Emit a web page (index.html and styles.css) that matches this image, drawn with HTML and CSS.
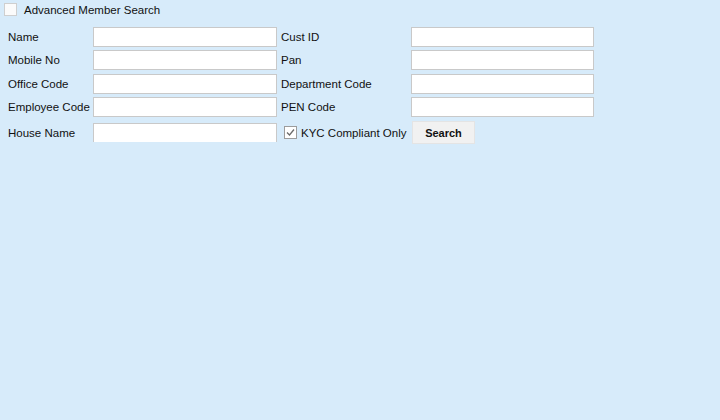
FILE: index.html
```html
<!DOCTYPE html>
<html>
<head>
<meta charset="utf-8">
<link rel="stylesheet" href="styles.css">
</head>
<body>
<div class="page">
  <label class="adv">
    <span class="box box-empty"></span>
    <span class="adv-text">Advanced Member Search</span>
  </label>
  <div class="form">
    <div class="lbl">Name</div>
    <div class="field"><span class="inp"></span></div>
    <div class="lbl lbl-r">Cust ID</div>
    <div class="field"><span class="inp"></span></div>

    <div class="lbl">Mobile No</div>
    <div class="field"><span class="inp"></span></div>
    <div class="lbl lbl-r">Pan</div>
    <div class="field"><span class="inp"></span></div>

    <div class="lbl">Office Code</div>
    <div class="field"><span class="inp"></span></div>
    <div class="lbl lbl-r">Department Code</div>
    <div class="field"><span class="inp"></span></div>

    <div class="lbl">Employee Code</div>
    <div class="field"><span class="inp"></span></div>
    <div class="lbl lbl-r">PEN Code</div>
    <div class="field"><span class="inp"></span></div>

    <div class="lbl last">House Name</div>
    <div class="field last"><span class="inp inp-open"></span></div>
    <div class="lbl last kyc">
      <span class="box box-checked">
        <svg width="11" height="11" viewBox="0 0 11 11"><path d="M2 5.5 L4.5 8 L9 2.5" fill="none" stroke="#6b6b6b" stroke-width="1.3"/></svg>
      </span>
      <span>KYC Compliant Only</span>
    </div>
    <div class="field last"><span class="btn">Search</span></div>
  </div>
</div>
</body>
</html>
```

FILE: styles.css
```css
html, body {
  margin: 0;
  padding: 0;
  background: #d7ebfa;
}
body {
  width: 720px;
  height: 420px;
  font-family: "Liberation Sans", Arial, sans-serif;
  font-size: 11.5px;
  color: #111;
}
.page {
  padding: 3px 0 0 4px;
}
.adv {
  display: flex;
  align-items: center;
  height: 13px;
}
.box {
  display: inline-flex;
  align-items: center;
  justify-content: center;
  box-sizing: border-box;
  width: 13px;
  height: 13px;
  background: #fff;
}
.box-empty {
  border: 1px solid #cfcfcf;
  background: #fbfbfb;
}
.box-checked {
  border: 1px solid #9c9c9c;
  margin-right: 4px;
}
.adv-text {
  margin-left: 7px;
}
.form {
  display: grid;
  grid-template-columns: 89px 184px 134px 183px;
  grid-auto-rows: 20px;
  row-gap: 3.33px;
  margin-top: 11px;
}
.lbl {
  display: flex;
  align-items: center;
  padding-left: 4px;
  white-space: nowrap;
}
.field {
  display: flex;
  align-items: center;
}
.inp {
  display: block;
  box-sizing: border-box;
  width: 100%;
  height: 20px;
  background: #fff;
  border: 1px solid #c9c9c9;
}
.inp-open {
  height: 19px;
  border-bottom: none;
}
.last {
  height: 25px;
}
.kyc {
  padding-left: 7px;
}
.btn {
  display: flex;
  align-items: center;
  justify-content: center;
  box-sizing: border-box;
  width: 63px;
  height: 23px;
  margin-left: 1px;
  background: #f1f1f1;
  border: 1px solid #e4e4e4;
  font-weight: bold;
  font-size: 11px;
  color: #111;
}
```
